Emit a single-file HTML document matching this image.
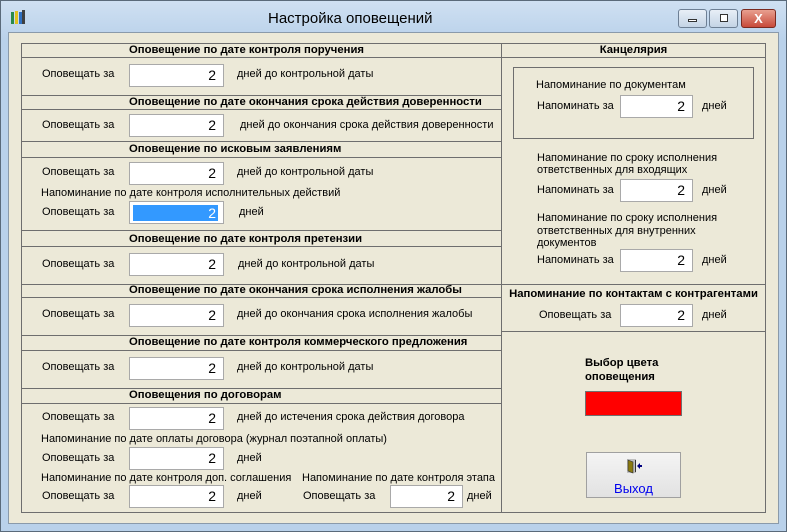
<!DOCTYPE html>
<html><head><meta charset="utf-8"><style>
*{margin:0;padding:0;box-sizing:border-box}
body{width:787px;height:532px;overflow:hidden;background:#b9d1ea;font-family:"Liberation Sans",Arial,sans-serif;font-size:11px;color:#000;position:relative}
.a{position:absolute;white-space:nowrap}
.win{position:absolute;left:0;top:0;width:787px;height:532px;border:1px solid #5a6a7a;background:linear-gradient(#cfe0f2,#b9d1ea 40px)}
.client{position:absolute;left:8px;top:32px;width:771px;height:492px;background:#ece9d8;border:1px solid #8a9aaa}
.hl{position:absolute;height:1px;background:#6e6e6e}
.vl{position:absolute;width:1px;background:#6e6e6e}
.h{position:absolute;font-weight:bold;white-space:nowrap;font-size:11.3px;left:129px}
.in{position:absolute;width:95px;height:23px;background:#fff;border:1px solid #a9a9a9;text-align:right;padding-right:7px;font-size:14px;line-height:21px}
.in.s{width:73px}
</style></head><body>
<div class="win"></div>
<div class="a" style="left:10px;top:9px;width:16px;height:16px">
<svg width="16" height="16"><rect x="1" y="3" width="3" height="12" fill="#2a8a4a"/><rect x="5" y="2" width="3" height="13" fill="#e0c020"/><rect x="9" y="3" width="3" height="12" fill="#3070c0"/><rect x="12" y="1" width="3" height="14" fill="#404040"/></svg></div>
<div class="a" style="left:268px;top:10px;font-size:15px;color:#000">Настройка оповещений</div>
<div class="a" style="left:678px;top:9px;width:29px;height:19px;border:1px solid #6d7f94;border-radius:3px;background:linear-gradient(#e8eff7,#c4d4e6)"><div style="position:absolute;left:9px;top:9px;width:9px;height:3px;background:#fff;border:1px solid #333"></div></div>
<div class="a" style="left:709px;top:9px;width:29px;height:19px;border:1px solid #6d7f94;border-radius:3px;background:linear-gradient(#e8eff7,#c4d4e6)"><div style="position:absolute;left:10px;top:4px;width:8px;height:8px;border:1px solid #333;background:#fff"></div></div>
<div class="a" style="left:741px;top:9px;width:35px;height:19px;border:1px solid #7a2a20;border-radius:3px;background:linear-gradient(#e8a090,#c84a3a);color:#fff;font-weight:bold;font-size:13px;text-align:center;line-height:17px">X</div>
<div class="client"></div>
<div class="a" style="left:21px;top:43px;width:745px;height:470px;border:1px solid #6e6e6e"></div>
<div class="vl" style="left:501px;top:43px;height:470px"></div>
<div class="hl" style="left:21px;top:57px;width:745px"></div>
<div class="hl" style="left:21px;top:95px;width:481px"></div>
<div class="hl" style="left:21px;top:109px;width:481px"></div>
<div class="hl" style="left:21px;top:141px;width:481px"></div>
<div class="hl" style="left:21px;top:157px;width:481px"></div>
<div class="hl" style="left:21px;top:230px;width:481px"></div>
<div class="hl" style="left:21px;top:246px;width:481px"></div>
<div class="hl" style="left:21px;top:284px;width:745px"></div>
<div class="hl" style="left:21px;top:297px;width:481px"></div>
<div class="hl" style="left:21px;top:335px;width:481px"></div>
<div class="hl" style="left:501px;top:331px;width:265px"></div>
<div class="hl" style="left:21px;top:350px;width:481px"></div>
<div class="hl" style="left:21px;top:388px;width:481px"></div>
<div class="hl" style="left:21px;top:403px;width:481px"></div>

<div class="h" style="top:44px">Оповещение по дате контроля поручения</div>
<div class="a" style="left:42px;top:68px">Оповещать за</div><div class="in" style="left:129px;top:64px">2</div><div class="a" style="left:237px;top:68px">дней до контрольной даты</div>

<div class="h" style="top:96px">Оповещение по дате окончания срока действия доверенности</div>
<div class="a" style="left:42px;top:119px">Оповещать за</div><div class="in" style="left:129px;top:114px">2</div><div class="a" style="left:240px;top:119px">дней до окончания срока действия доверенности</div>

<div class="h" style="top:143px">Оповещение по исковым заявлениям</div>
<div class="a" style="left:42px;top:166px">Оповещать за</div><div class="in" style="left:129px;top:162px">2</div><div class="a" style="left:237px;top:166px">дней до контрольной даты</div>
<div class="a" style="left:41px;top:187px">Напоминание по дате контроля исполнительных действий</div>
<div class="a" style="left:42px;top:206px">Оповещать за</div><div class="in" style="left:129px;top:201px;padding:3px 5px 0 3px"><div style="background:#3399ff;color:#fff;height:16px;line-height:16px;padding-right:2px">2</div></div><div class="a" style="left:239px;top:206px">дней</div>

<div class="h" style="top:233px">Оповещение по дате контроля претензии</div>
<div class="a" style="left:42px;top:258px">Оповещать за</div><div class="in" style="left:129px;top:253px">2</div><div class="a" style="left:238px;top:258px">дней до контрольной даты</div>

<div class="h" style="top:284px">Оповещение по дате окончания срока исполнения жалобы</div>
<div class="a" style="left:42px;top:308px">Оповещать за</div><div class="in" style="left:129px;top:304px">2</div><div class="a" style="left:237px;top:308px">дней до окончания срока исполнения жалобы</div>

<div class="h" style="top:336px">Оповещение по дате контроля коммерческого предложения</div>
<div class="a" style="left:42px;top:361px">Оповещать за</div><div class="in" style="left:129px;top:357px">2</div><div class="a" style="left:237px;top:361px">дней до контрольной даты</div>

<div class="h" style="top:389px">Оповещения по договорам</div>
<div class="a" style="left:42px;top:411px">Оповещать за</div><div class="in" style="left:129px;top:407px">2</div><div class="a" style="left:237px;top:411px">дней до истечения срока действия договора</div>
<div class="a" style="left:41px;top:433px">Напоминание по дате оплаты договора (журнал поэтапной оплаты)</div>
<div class="a" style="left:42px;top:452px">Оповещать за</div><div class="in" style="left:129px;top:447px">2</div><div class="a" style="left:237px;top:452px">дней</div>
<div class="a" style="left:41px;top:472px">Напоминание по дате контроля доп. соглашения</div>
<div class="a" style="left:302px;top:472px">Напоминание по дате контроля этапа</div>
<div class="a" style="left:42px;top:490px">Оповещать за</div><div class="in" style="left:129px;top:485px">2</div><div class="a" style="left:237px;top:490px">дней</div>
<div class="a" style="left:303px;top:490px">Оповещать за</div><div class="in s" style="left:390px;top:485px">2</div><div class="a" style="left:467px;top:490px">дней</div>

<div class="a" style="left:501px;top:44px;width:265px;text-align:center;font-weight:bold;font-size:11.3px">Канцелярия</div>
<div class="a" style="left:513px;top:67px;width:241px;height:72px;border:1px solid #6e6e6e"></div>
<div class="a" style="left:536px;top:79px">Напоминание по документам</div>
<div class="a" style="left:537px;top:100px">Напоминать за</div><div class="in s" style="left:620px;top:95px">2</div><div class="a" style="left:702px;top:100px">дней</div>
<div class="a" style="left:537px;top:152px;line-height:12px">Напоминание по сроку исполнения<br>ответственных для входящих</div>
<div class="a" style="left:537px;top:184px">Напоминать за</div><div class="in s" style="left:620px;top:179px">2</div><div class="a" style="left:702px;top:184px">дней</div>
<div class="a" style="left:537px;top:212px;line-height:12.5px">Напоминание по сроку исполнения<br>ответственных для внутренних<br>документов</div>
<div class="a" style="left:537px;top:254px">Напоминать за</div><div class="in s" style="left:620px;top:249px">2</div><div class="a" style="left:702px;top:254px">дней</div>
<div class="a" style="left:501px;top:288px;width:265px;text-align:center;font-weight:bold;font-size:11.3px">Напоминание по контактам с контрагентами</div>
<div class="a" style="left:539px;top:309px">Оповещать за</div><div class="in s" style="left:620px;top:304px">2</div><div class="a" style="left:702px;top:309px">дней</div>

<div class="a" style="left:585px;top:356px;font-weight:bold;line-height:14px;font-size:11.3px">Выбор цвета<br>оповещения</div>
<div class="a" style="left:585px;top:391px;width:97px;height:25px;background:#f00;border:1px solid #707070"></div>
<div class="a" style="left:586px;top:452px;width:95px;height:46px;border:1px solid #a0a0a0;background:linear-gradient(#f4f4f4,#e2e2e2);text-align:center">
<svg width="16" height="16" style="position:absolute;left:39px;top:5px"><rect x="1" y="1" width="9" height="14" fill="#c0c0c0"/><polygon points="2,2 7,4 7,15 2,13" fill="#8a7a10" stroke="#333" stroke-width=".6"/><rect x="9" y="2" width="1" height="12" fill="#333"/><polygon points="11,8 14,5 14,11" fill="#000080"/><rect x="13" y="7" width="3" height="2" fill="#000080"/></svg>
<div style="position:absolute;left:0;width:100%;top:28px;color:#0000ee;font-size:13px">Выход</div></div>
</body></html>
